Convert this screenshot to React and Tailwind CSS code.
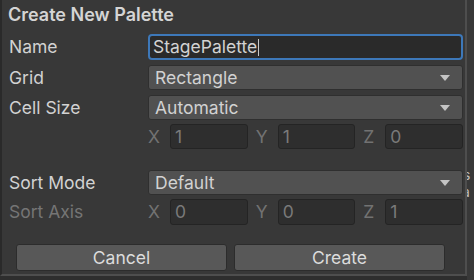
import React from "react";

function Caret() {
  return (
    <svg width="10" height="6" viewBox="0 0 10 6" className="shrink-0">
      <path d="M0 0 L10 0 L5 6 Z" fill="#c4c4c4" />
    </svg>
  );
}

function Dropdown({ value }) {
  return (
    <div className="flex-1 h-full flex items-center justify-between pl-[6px] pr-[12px] bg-[#515151] border border-[#2f2f2f] rounded-[3px] text-[#d2d2d2]">
      <span>{value}</span>
      <Caret />
    </div>
  );
}

function Row({ label, dim, className = "", children }) {
  return (
    <div className={`flex items-center ${className}`}>
      <div className={`w-[139px] shrink-0 ${dim ? "text-[#757575]" : "text-[#d2d2d2]"}`}>{label}</div>
      <div className="flex-1 h-full flex">{children}</div>
    </div>
  );
}

function Vec3({ values }) {
  const axes = ["X", "Y", "Z"];
  return (
    <div className="flex-1 flex gap-[8px] h-full">
      {axes.map((a, i) => (
        <div key={a} className="flex-1 flex items-center h-full">
          <span className="w-[22px] shrink-0 text-[#727272]">{a}</span>
          <div className="flex-1 h-full flex items-center px-[4px] bg-[#2e2e2e] border border-[#242424] rounded-[3px] text-[#7a7a7a]">
            {values[i]}
          </div>
        </div>
      ))}
    </div>
  );
}

export default function App() {
  return (
    <div
      className="w-[474px] h-[280px] bg-[#2e2e2e] flex overflow-hidden text-[17.5px] leading-none"
      style={{ fontFamily: "Inter, 'Noto Sans', sans-serif" }}
    >
      <div className="w-[467px] h-[276px] shrink-0 bg-[#383838] border-l-2 border-l-[#2a2a2a] border-r-2 border-b-2 border-r-[#4e4e4e] border-b-[#4e4e4e] flex flex-col pl-[7px] pr-[2px]">
        <div className="h-[34px] pt-[6px] text-[#d4d4d4] font-semibold text-[18px]">
          <span className="-ml-[1px]">Create New Palette</span>
        </div>

        <Row label="Name" className="h-[26px]">
          <div className="flex-1 h-full flex items-center pl-[3px] bg-[#2a2a2a] border-2 border-[#3d78b9] rounded-[4px] text-[#d2d2d2]">
            <span>StagePalette</span>
            <span className="w-px h-[17px] bg-[#c8c8c8] ml-px" />
          </div>
        </Row>

        <Row label="Grid" className="h-[25px] mt-[5px]">
          <Dropdown value="Rectangle" />
        </Row>

        <Row label="Cell Size" className="h-[25px] mt-[5px]">
          <Dropdown value="Automatic" />
        </Row>

        <Row label="" className="h-[25px] mt-[4px]">
          <Vec3 values={["1", "1", "0"]} />
        </Row>

        <Row label="Sort Mode" className="h-[25px] mt-[21px]">
          <Dropdown value="Default" />
        </Row>

        <Row label="Sort Axis" dim className="h-[26px] mt-[4px]">
          <Vec3 values={["0", "0", "1"]} />
        </Row>

        <div className="flex gap-[7px] h-[27px] mt-[19px] pl-[7px] pr-[18px]">
          <button className="flex-1 bg-[#585858] border border-[#2c2c2c] rounded-[3px] text-[#dcdcdc]">Cancel</button>
          <button className="flex-1 bg-[#585858] border border-[#2c2c2c] rounded-[3px] text-[#dcdcdc]">Create</button>
        </div>
      </div>

      <div className="flex-1 bg-[#383838] overflow-hidden flex flex-col pt-[166px] text-[#bdbdbd] text-[14px]">
        <span className="-ml-[4px] leading-[17px]">s</span>
        <span className="-ml-[5px] leading-[17px]">a</span>
      </div>
    </div>
  );
}
